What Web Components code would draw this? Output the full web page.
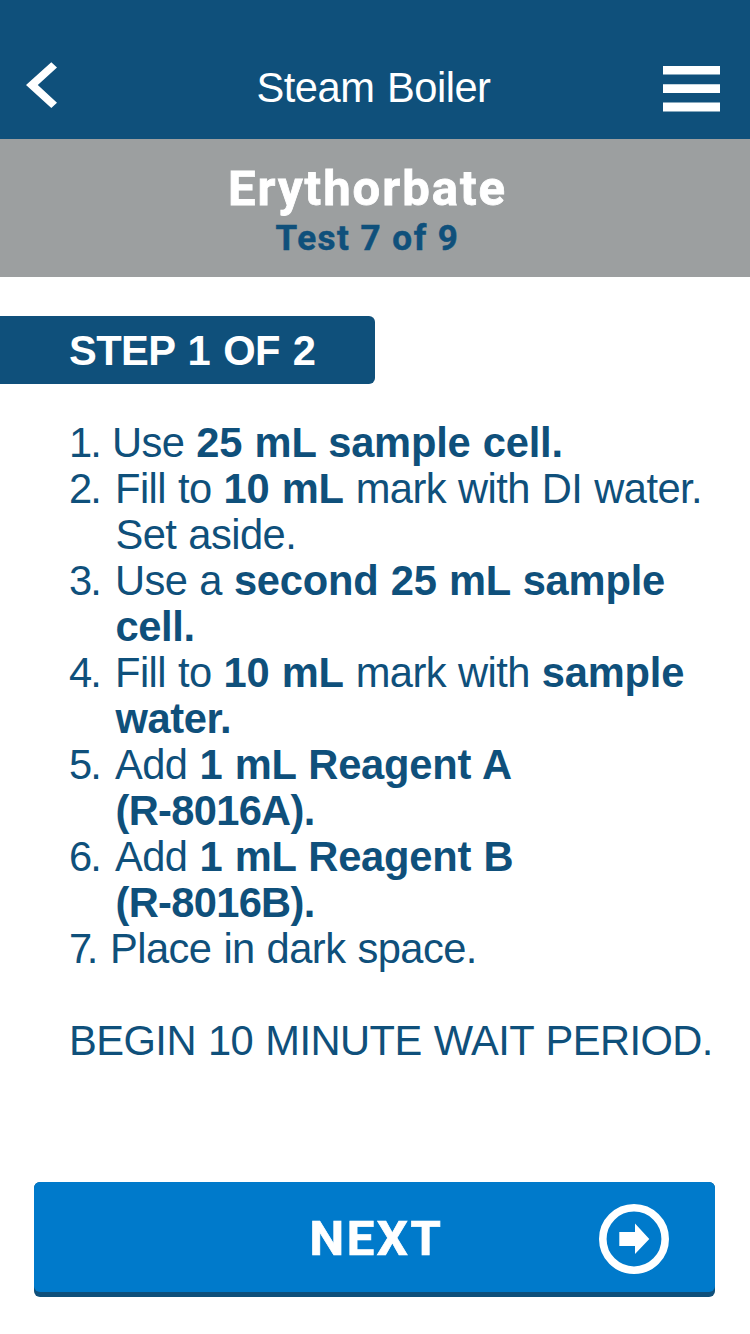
<!DOCTYPE html>
<html lang="en">
<head>
<meta charset="utf-8">
<title>Steam Boiler</title>
<style>
body { margin: 0; background: #fff; font-family: "Liberation Sans", Arial, sans-serif; }
</style>
</head>
<body>
<test-screen></test-screen>
<script>
const define = (name, html) => {
  const tpl = document.createElement('template');
  tpl.innerHTML = html;
  customElements.define(name, class extends HTMLElement {
    constructor() {
      super();
      this.attachShadow({ mode: 'open' }).append(tpl.content.cloneNode(true));
    }
  });
};

define('app-bar', `
<style>
:host { display: grid; grid-template-columns: 60px 1fr 60px; align-items: center; box-sizing: border-box;
  height: 139px; padding: 36px 29px 0 26px; background: #0f507b; color: #fff; }
h1 { margin: 0; font-size: 41.67px; font-weight: 400; line-height: 48px; text-align: center; letter-spacing: -.5px; word-spacing: 1.5px; white-space: nowrap; }
svg { display: block; }
.menu { justify-self: end; margin-right: 1px; }
</style>
<svg width="32" height="52" viewBox="0 0 32 52"><path d="M25.3 .2 31 5.4 11.8 23 31 40.8 25.3 46 0 23Z" fill="#fff"/></svg>
<h1><slot></slot></h1>
<svg class="menu" width="57" height="48" viewBox="0 0 57 48"><path d="M0 1.9H57V10.6H0ZM0 20.2H57V28.9H0ZM0 38.5H57V47.4H0Z" fill="#fff"/></svg>
`);

define('test-heading', `
<style>
:host { display: block; box-sizing: border-box; height: 138px; padding-top: 21px; background: #9c9fa0;
  font-family: Roboto, sans-serif; font-weight: 700; text-align: center; }
h2 { margin: 0 15px 0 0; font-size: 49px; line-height: 58px; color: #fff; letter-spacing: 2px; -webkit-text-stroke: .8px #fff; }
p { margin: 0 15px 0 0; font-size: 35px; line-height: 41px; color: #0f507b; letter-spacing: 1.5px; -webkit-text-stroke: .5px #0f507b; }
</style>
<h2><slot name="name"></slot></h2>
<p><slot></slot></p>
`);

define('step-label', `
<style>
:host { display: block; box-sizing: border-box; width: 375px; height: 68px; margin-top: 39px; padding-left: 69px;
  border-radius: 0 6px 6px 0; background: #0f507b; color: #fff; font-size: 41.67px; font-weight: 700; line-height: 70px;
  letter-spacing: -.6px; word-spacing: 2px; }
</style>
<slot></slot>
`);

define('test-step', `
<style>
:host { display: grid; grid-template-columns: var(--lead, 46px) auto; white-space: nowrap; }
.num { letter-spacing: var(--tight, -2px); }
::slotted(b) { letter-spacing: -.2px; }
::slotted(.tight) { letter-spacing: -.4px; }
::slotted(.code) { letter-spacing: -.7px; }
.rest { grid-column: 1 / 3; padding-left: 46.5px; }
</style>
<span class="num"><slot name="num"></slot></span><span><slot></slot></span>
<span class="rest"><slot name="rest"></slot></span>
`);

define('step-list', `
<style>
:host { display: block; margin: 36px 0 0 69px; color: #0f507b; font-size: 41.67px; line-height: 46px; letter-spacing: -.55px; word-spacing: .9px; }
</style>
<slot></slot>
`);

define('wait-note', `
<style>
:host { display: block; margin: 46px 0 0 69px; color: #0f507b; font-size: 41.67px; line-height: 46px; letter-spacing: -.54px; word-spacing: 1px; white-space: nowrap; }
</style>
<slot></slot>
`);

define('next-button', `
<style>
:host { display: block; margin: auto 35px 37px 34px; height: 115px; border-radius: 6px; background: #0f507b; }
button { display: grid; grid-template-columns: 70px 1fr 70px; align-items: center; box-sizing: border-box; width: 100%; height: 110px;
  margin: 0; padding: 4px 46px 0 50px; border: 0; border-radius: 6px; background: #007acb; color: #fff;
  font: 700 49px/58px Roboto, sans-serif; letter-spacing: 2.6px; -webkit-text-stroke: .7px #fff; }
svg { display: block; }
</style>
<button><span></span><span><slot></slot></span>
<svg width="70" height="70" viewBox="0 0 70 70"><circle cx="35" cy="35" r="31.2" fill="none" stroke="#fff" stroke-width="7.6"/><path d="M20.3 28H36V19.5L50.3 35 36 50V42H20.3Z" fill="#fff"/></svg>
</button>
`);

define('test-screen', `
<style>
:host { display: flex; flex-direction: column; height: 1334px; overflow: hidden; background: #fff; }
.first { --lead: 43px; }
.last { --lead: 41px; --tight: -5.5px; }
</style>
<app-bar>Steam Boiler</app-bar>
<test-heading><span slot="name">Erythorbate</span>Test 7 of 9</test-heading>
<step-label>STEP 1 OF 2</step-label>
<step-list>
<test-step class="first"><span slot="num">1.</span>Use <b>25 mL sample cell.</b></test-step>
<test-step><span slot="num">2.</span>Fill to <b>10 mL</b> mark with DI water.<span slot="rest">Set aside.</span></test-step>
<test-step><span slot="num">3.</span>Use a <b>second 25 mL sample</b><b slot="rest" class="tight">cell.</b></test-step>
<test-step><span slot="num">4.</span>Fill to <b>10 mL</b> mark with <b>sample</b><b slot="rest" class="tight">water.</b></test-step>
<test-step><span slot="num">5.</span>Add <b>1 mL Reagent A</b><b slot="rest" class="code">(R-8016A).</b></test-step>
<test-step><span slot="num">6.</span>Add <b>1 mL Reagent B</b><b slot="rest" class="code">(R-8016B).</b></test-step>
<test-step class="last"><span slot="num">7.</span>Place in dark space.</test-step>
</step-list>
<wait-note>BEGIN 10 MINUTE WAIT PERIOD.</wait-note>
<next-button>NEXT</next-button>
`);
</script>
</body>
</html>
